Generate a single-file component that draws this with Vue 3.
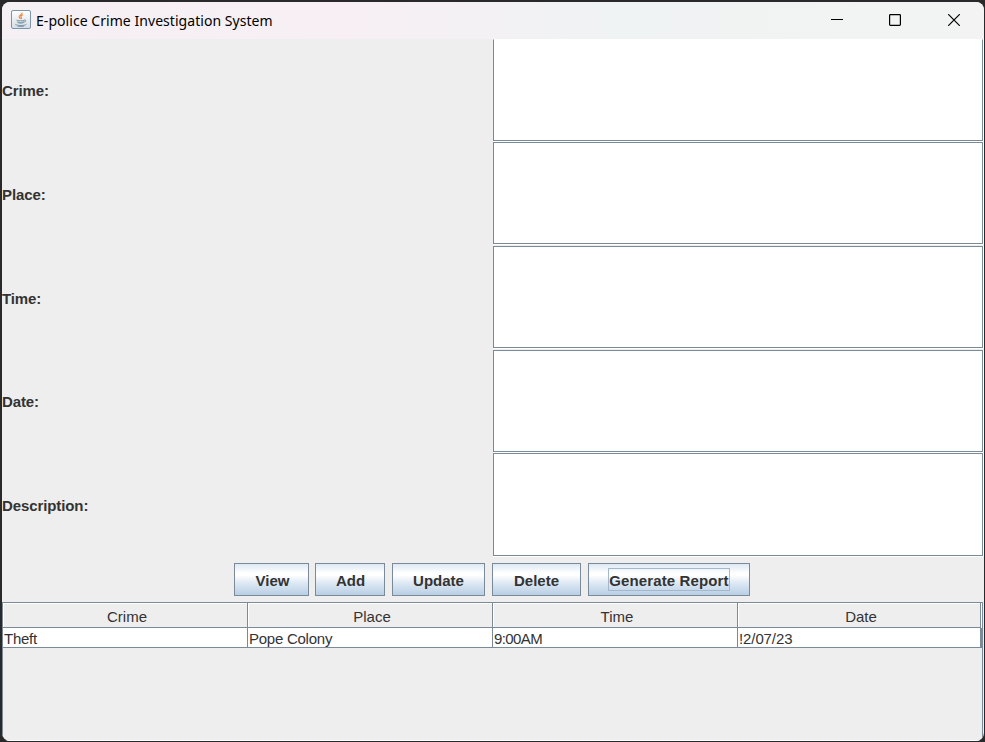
<script setup>
import { reactive } from 'vue'

const fields = reactive([
  { label: 'Crime:', value: '' },
  { label: 'Place:', value: '' },
  { label: 'Time:', value: '' },
  { label: 'Date:', value: '' },
  { label: 'Description:', value: '' },
])
const actions = [
  { label: 'View', kind: 'view' },
  { label: 'Add', kind: 'add' },
  { label: 'Update', kind: 'update' },
  { label: 'Delete', kind: 'delete' },
  { label: 'Generate Report', kind: 'report', focused: true },
]
const columns = ['Crime', 'Place', 'Time', 'Date']
const rows = [['Theft', 'Pope Colony', '9:00AM', '!2/07/23']]
</script>

<template>
  <div class="desktop">
    <main class="window">
      <header class="titlebar">
        <svg class="app-icon" viewBox="0 0 20 20">
          <defs>
            <linearGradient id="tile" x1="0" y1="0" x2="0" y2="1">
              <stop offset="0" stop-color="#ffffff" />
              <stop offset="1" stop-color="#d5dde4" />
            </linearGradient>
          </defs>
          <rect x=".5" y=".5" width="19" height="18" rx="1.5" fill="url(#tile)" stroke="#7d95a9" />
          <path d="M11 2.5c.8 2-3.5 2.9-2.9 4.5.4.8 1.1 1.2 1.4 2M12 4.8c-2.4.9-2.6 1.6-1.7 2.5.5.5.3 1.2-.2 1.6" fill="none" stroke="#ee8a42" stroke-width="1.2" />
          <path d="M5.3 9.8c2.5.6 5.6.6 8.2 0l-.7 3.2c-1.8 1-4.6 1-6.3 0z" fill="#8aa1b3" />
          <path d="M6.2 11.4h6.4" stroke="#d4dde4" stroke-width=".8" />
          <path d="M13.2 10.1c2.5-.5 2.1 1.8-.5 2.2M4.3 14.3c2 1.6 9.6 1.6 11.1 0M6.5 16.1c2 .5 4.6.5 6.6 0" fill="none" stroke="#6e8ca3" stroke-width=".9" />
        </svg>
        <h1 class="title">E-police Crime Investigation System</h1>
        <nav class="controls">
          <svg viewBox="0 0 12 12" shape-rendering="crispEdges"><path d="M0 5.5h12" /></svg>
          <svg viewBox="0 0 12 12"><rect x=".6" y=".6" width="10.8" height="10.8" rx=".8" /></svg>
          <svg viewBox="0 0 12 12"><path d="M.2.2l11.6 11.6M11.8.2L.2 11.8" /></svg>
        </nav>
      </header>

      <form class="form" @submit.prevent>
        <label v-for="f in fields" :key="f.label" class="row">
          <span class="label">{{ f.label }}</span>
          <input v-model="f.value" class="field" type="text" />
        </label>
      </form>

      <div class="actions">
        <button v-for="a in actions" :key="a.label" class="btn" :class="[a.kind, { focused: a.focused }]">
          <span>{{ a.label }}</span>
        </button>
      </div>

      <section class="table">
        <div class="grid head">
          <div v-for="c in columns" :key="c" class="cell">{{ c }}</div>
        </div>
        <div v-for="(r, i) in rows" :key="i" class="grid body">
          <div v-for="(v, j) in r" :key="j" class="cell">{{ v }}</div>
        </div>
      </section>
    </main>
  </div>
</template>

<style>
body { margin: 0; overflow: hidden; }
</style>

<style scoped>
* { box-sizing: border-box; }
.desktop {
  width: 985px;
  height: 742px;
  padding: 2px 1px 1px 2px;
  background: #29282a;
  font-family: "Liberation Sans", Arial, sans-serif;
  font-size: 15px;
  color: #333;
}
.window {
  width: 982px;
  height: 739px;
  display: flex;
  flex-direction: column;
  overflow: hidden;
  border-radius: 8px;
  background: #eee;
}
.titlebar {
  flex: none;
  height: 37px;
  display: flex;
  align-items: center;
  padding: 0 24px 0 9px;
  background: linear-gradient(90deg, #f5f0f4 0%, #f7eff3 35%, #f0f3f3 62%, #f3f3f3 100%);
}
.app-icon { width: 20px; height: 20px; margin-top: -1px; }
.title {
  margin: 1px 0 0 5px;
  font: 400 14px/20px "Noto Sans", "Open Sans", sans-serif;
  letter-spacing: 0.05px;
  color: #000;
  white-space: nowrap;
}
.controls { display: flex; margin: -1px 0 0 auto; }
.controls svg {
  width: 12px;
  height: 12px;
  fill: none;
  stroke: #000;
  stroke-width: 1.2;
}
.controls svg:nth-child(2) { margin: 0 47px 0 46px; }
.form {
  flex: none;
  display: grid;
  grid-template-rows: 103px 104px 104px 103px 104px;
}
.row { display: grid; grid-template-columns: 491px 491px; }
.label { align-self: center; font-weight: 700; line-height: 17px; letter-spacing: -0.1px; }
.field {
  width: 490px;
  height: 102px;
  padding: 2px;
  border: 1px solid #7a8a99;
  border-radius: 0;
  outline: none;
  background: #fff;
  box-shadow: 0 1px #fff, 1px 0 #fff;
  font: inherit;
}
.row:first-child .field { border-top-color: #fff; }
.row:last-child .field { height: 103px; }
.actions {
  flex: none;
  height: 45px;
  display: flex;
  gap: 7px;
  padding: 6px 0 6px 232px;
}
.btn {
  height: 33px;
  padding: 0;
  display: flex;
  align-items: center;
  justify-content: center;
  border: 1px solid #7a8a99;
  border-radius: 0;
  background: linear-gradient(#dde8f3 0%, #fff 30%, #fff 36%, #dde8f3 62%, #b8cfe5 100%);
  font: 700 15px/17px "Liberation Sans", Arial, sans-serif;
  color: #333;
}
.btn span { padding-top: 2px; white-space: nowrap; }
.view { width: 75px; margin-right: -1px; padding-left: 2px; }
.add { width: 70px; padding-left: 1px; }
.update { width: 93px; }
.delete { width: 89px; }
.report { width: 162px; }
.focused span {
  width: 122px;
  height: 23px;
  padding: 3px 0 0;
  border: 1px solid #a3b8cc;
  letter-spacing: 0.12px;
}
.table {
  flex: 1;
  border: solid #7a8a99;
  border-width: 1px 1px 0;
  border-bottom: 1px solid #fff;
  width: 981px;
}
.grid { display: grid; grid-template-columns: 245px 245px 245px 243px; }
.cell { border-right: 1px solid #7a8a99; border-bottom: 1px solid #7a8a99; white-space: nowrap; }
.head { border-right: 1px solid #fff; }
.head .cell {
  height: 25px;
  padding: 4px 0 0 4px;
  line-height: 20px;
  text-align: center;
  box-shadow: inset 1px 1px #fff;
}
.body { background: #7a8a99; }
.body .cell { height: 20px; padding-left: 1px; line-height: 21px; background: #fff; letter-spacing: -0.25px; }
.body .cell:nth-child(3) { letter-spacing: -0.6px; }
.body .cell:last-child { letter-spacing: -0.1px; }
</style>
